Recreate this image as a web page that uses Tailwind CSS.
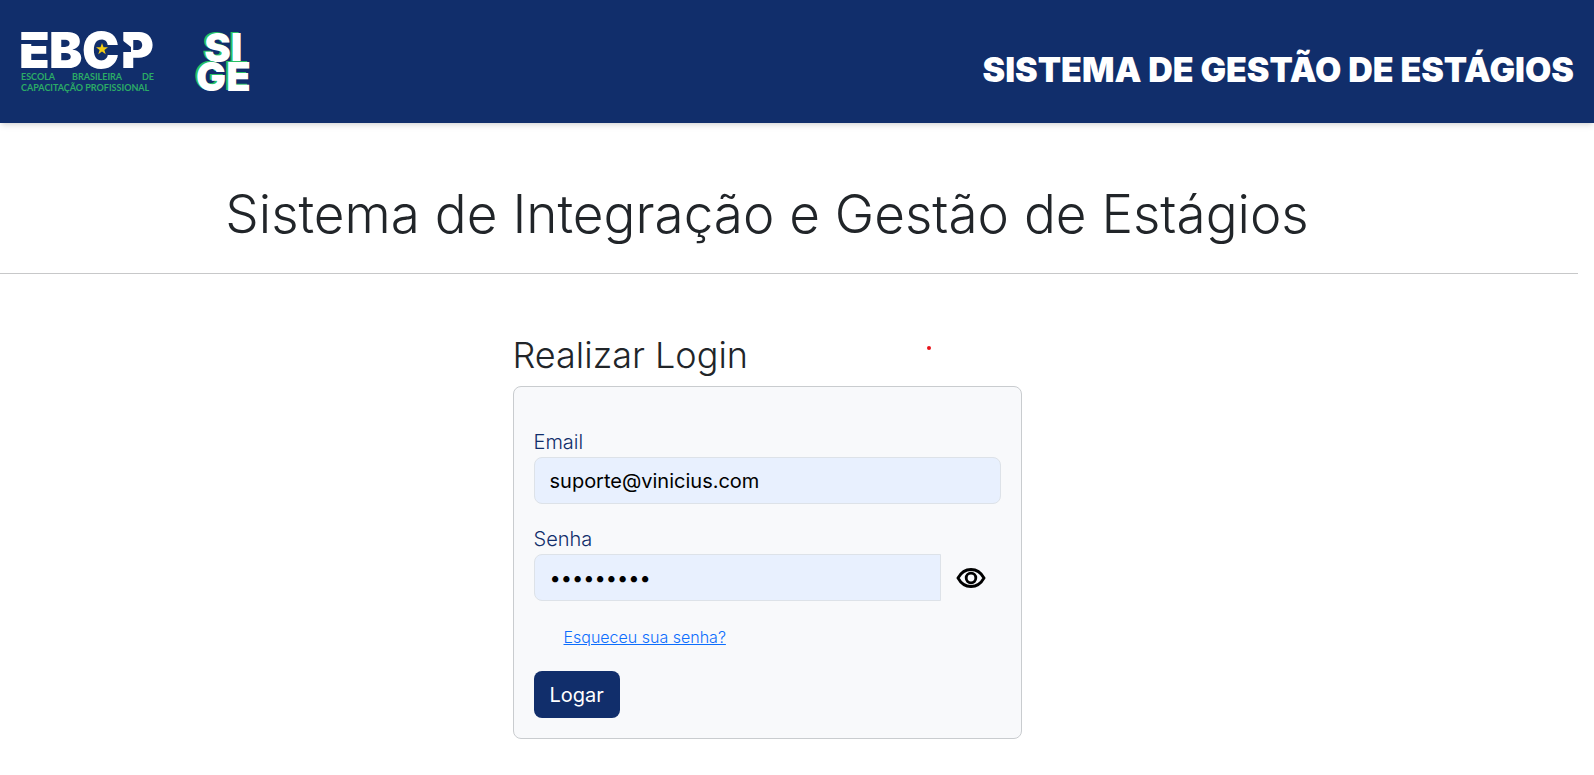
<!DOCTYPE html>
<html lang="pt-BR">
  <head>
    <meta charset="UTF-8" />
    <meta name="viewport" content="width=device-width, initial-scale=1.0" />
    <title>SIGE - Login</title>
    <script src="https://cdn.jsdelivr.net/npm/@tailwindcss/browser@4"></script>
  </head>
  <body class="bg-white font-['Inter',sans-serif] text-[#212529]">
    <header
      class="flex h-[123px] items-center justify-between bg-[#112e6b] px-5 text-white shadow-md"
    >
      <div class="flex items-center gap-10">
        <svg
          class="h-16 w-[136px] overflow-visible"
          viewBox="0 0 136 64"
          role="img"
          aria-label="EBCP"
        >
          <g
            font-family="Inter, sans-serif"
            font-size="50"
            font-weight="900"
            fill="#fff"
          >
            <text x="-1" y="38">E</text>
            <text x="29" y="38">B</text>
            <text x="62" y="38">C</text>
            <text x="101" y="38">P</text>
          </g>
          <!-- stencil cuts -->
          <g fill="#112e6b">
            <path d="M0 10h12v4H0z" />
            <path d="M102 10l9 7v5h-9z" />
          </g>
          <path
            fill="#f2cb13"
            d="M82 13l1.500 4.200h4.500l-3.600 2.700 1.300 4.300-3.700-2.600-3.700 2.600 1.300-4.300-3.600-2.700h4.500z"
          />
          <g
            font-family="Lato, sans-serif"
            font-size="9"
            font-weight="700"
            fill="#2bab66"
          >
            <text x="1" y="50">ESCOLA</text>
            <text x="52" y="50">BRASILEIRA</text>
            <text x="122" y="50">DE</text>
            <text x="1" y="61">CAPACITAÇÃO PROFISSIONAL</text>
          </g>
        </svg>
        <div
          class="text-center text-[40px] leading-[29px] font-black [text-shadow:-2px_-1px_0_#29c063]"
        >
          <div>SI</div>
          <div>GE</div>
        </div>
      </div>
      <p class="pt-4 text-[34px] leading-10 font-black">
        SISTEMA DE GESTÃO DE ESTÁGIOS
      </p>
    </header>

    <main>
      <h1
        class="mt-[58px] pr-[60px] text-center text-[53px] leading-[66px] font-light"
      >
        Sistema de Integração e Gestão de Estágios
      </h1>
      <hr class="mt-[26px] mr-4 border-[#c7c8c9]" />

      <div class="pr-[60px]">
        <section class="mx-auto mt-15 max-w-[509px]">
          <div class="flex items-start justify-between">
            <h2 class="text-[36px] leading-[42px] font-light">
              Realizar Login
            </h2>
            <span class="mt-3 mr-[91px] size-1 rounded-full bg-[#e8131b]"></span>
          </div>
          <form
            class="mt-[10px] rounded-lg border border-[#c9cccf] bg-[#f8f9fb] px-5 pt-10 pb-5 text-xl"
          >
            <label
              for="email"
              class="block leading-[30px] font-light text-[#112e6b]"
              >Email</label
            >
            <input
              id="email"
              type="email"
              value="suporte@vinicius.com"
              class="block h-[47px] w-full rounded-lg border border-[#dde2e8] bg-[#e8f0fe] px-[15px] text-black outline-none"
            />

            <label
              for="senha"
              class="mt-5 block leading-[30px] font-light text-[#112e6b]"
              >Senha</label
            >
            <div class="flex">
              <input
                id="senha"
                type="password"
                value="123456789"
                class="h-[47px] min-w-0 flex-1 rounded-l-lg border border-[#dde2e8] bg-[#e8f0fe] px-[15px] text-black outline-none"
              />
              <button
                type="button"
                id="toggleSenha"
                aria-label="Mostrar senha"
                class="flex w-15 items-center justify-center"
              >
                <svg
                  class="h-6 w-8"
                  viewBox="0 0 32 24"
                  fill="none"
                  stroke="#000"
                  stroke-width="2.800"
                >
                  <path
                    d="M3 12C6 6.500 10.500 3.500 16 3.500S26 6.500 29 12C26 17.500 21.500 20.500 16 20.500S6 17.500 3 12Z"
                  />
                  <circle cx="16" cy="12" r="4.800" />
                </svg>
              </button>
            </div>

            <a
              href="#"
              class="mt-6 ml-[30px] block w-fit text-base leading-6 font-light text-[#0d6efd] underline"
              >Esqueceu sua senha?</a
            >
            <button
              type="submit"
              class="mt-[22px] block h-[47px] rounded-lg bg-[#112e6b] px-4 text-white"
            >
              Logar
            </button>
          </form>
        </section>
      </div>
    </main>

    <script>
      const senha = document.getElementById("senha");
      document.getElementById("toggleSenha").addEventListener("click", () => {
        senha.type = senha.type === "password" ? "text" : "password";
      });
    </script>
  </body>
</html>
